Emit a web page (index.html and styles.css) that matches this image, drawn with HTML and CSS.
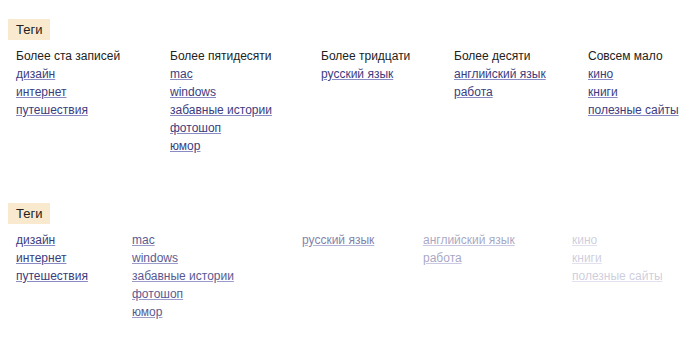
FILE: index.html
```html
<!DOCTYPE html>
<html lang="ru">
<head>
    <meta charset="UTF-8">
    <title>Теги</title>
    <link rel="stylesheet" href="styles.css">
</head>
<body>
    <div class="tags tags-grouped">
        <div class="tags-title">Теги</div>
        <div class="tags-columns">
            <div class="tags-col">
                <div class="tags-head">Более ста записей</div>
                <a href="#">дизайн</a>
                <a href="#">интернет</a>
                <a href="#">путешествия</a>
            </div>
            <div class="tags-col">
                <div class="tags-head">Более пятидесяти</div>
                <a href="#">mac</a>
                <a href="#">windows</a>
                <a href="#">забавные истории</a>
                <a href="#">фотошоп</a>
                <a href="#">юмор</a>
            </div>
            <div class="tags-col">
                <div class="tags-head">Более тридцати</div>
                <a href="#">русский язык</a>
            </div>
            <div class="tags-col">
                <div class="tags-head">Более десяти</div>
                <a href="#">английский язык</a>
                <a href="#">работа</a>
            </div>
            <div class="tags-col">
                <div class="tags-head">Совсем мало</div>
                <a href="#">кино</a>
                <a href="#">книги</a>
                <a href="#">полезные сайты</a>
            </div>
        </div>
    </div>

    <div class="tags tags-faded">
        <div class="tags-title">Теги</div>
        <div class="tags-columns">
            <div class="tags-col level-1">
                <a href="#">дизайн</a>
                <a href="#">интернет</a>
                <a href="#">путешествия</a>
            </div>
            <div class="tags-col level-2">
                <a href="#">mac</a>
                <a href="#">windows</a>
                <a href="#">забавные истории</a>
                <a href="#">фотошоп</a>
                <a href="#">юмор</a>
            </div>
            <div class="tags-col level-3">
                <a href="#">русский язык</a>
            </div>
            <div class="tags-col level-4">
                <a href="#">английский язык</a>
                <a href="#">работа</a>
            </div>
            <div class="tags-col level-5">
                <a href="#">кино</a>
                <a href="#">книги</a>
                <a href="#">полезные сайты</a>
            </div>
        </div>
    </div>
</body>
</html>
```

FILE: styles.css
```css
body {
    font-family: 'Liberation Sans', Arial, sans-serif;
    font-size: 12px;
    line-height: 18px;
    color: #222;
    background-color: #fff;
    margin: 8px;
}

.tags {
    padding-top: 11px;
}

.tags-faded {
    margin-top: 37px; /* 上の塊との間隔 */
}

.tags-title {
    display: inline-block;
    font-size: 13px;
    background-color: #f8e9cf; /* 淡いベージュ */
    padding: 2px 8px 1px;
}

.tags-columns {
    display: grid;
    margin-top: 7px;
    padding-left: 8px;
}

.tags-grouped .tags-columns {
    grid-template-columns: 154px 151px 133px 134px 1fr;
}

.tags-faded .tags-columns {
    grid-template-columns: 116px 170px 121px 149px 1fr;
}

.tags-col {
    display: flex;
    flex-direction: column;
    align-items: flex-start;
}

.tags-head {
    color: #222;
}

.tags-col a {
    color: #3c3c7e;
    text-decoration: underline;
    text-decoration-color: #8a8ac4;
}

.level-2 {
    opacity: 0.85;
}

.level-3 {
    opacity: 0.65;
}

.level-4 {
    opacity: 0.45;
}

.level-5 {
    opacity: 0.25;
}
```
